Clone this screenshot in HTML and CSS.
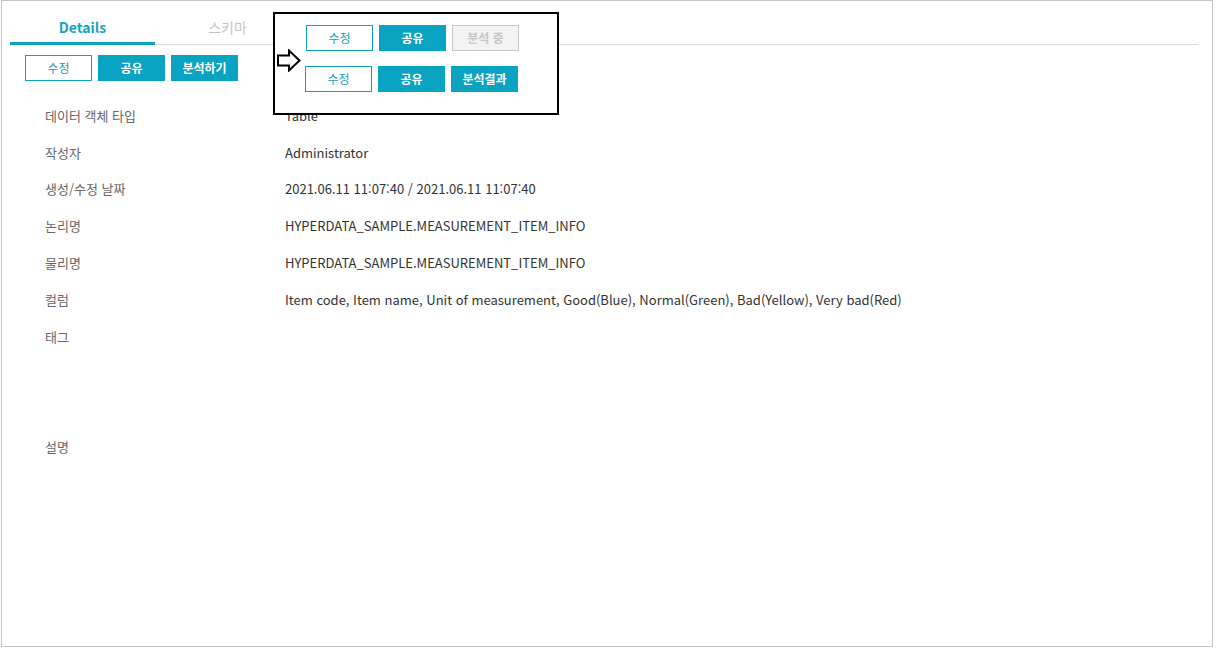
FILE: index.html
```html
<!DOCTYPE html>
<html lang="ko">
<head>
<meta charset="utf-8">
<link rel="stylesheet" href="styles.css">
</head>
<body>
<div class="frame">
  <div class="tabbar">
    <div class="tab active">Details</div>
    <div class="tab">스키마</div>
  </div>
  <div class="actions">
    <button class="btn outline">수정</button>
    <button class="btn fill">공유</button>
    <button class="btn fill">분석하기</button>
  </div>
  <div class="rows">
    <div class="row"><div class="label">데이터 객체 타입</div><div class="value">Table</div></div>
    <div class="row"><div class="label">작성자</div><div class="value">Administrator</div></div>
    <div class="row"><div class="label">생성/수정 날짜</div><div class="value">2021.06.11 11:07:40 / 2021.06.11 11:07:40</div></div>
    <div class="row"><div class="label">논리명</div><div class="value">HYPERDATA_SAMPLE.MEASUREMENT_ITEM_INFO</div></div>
    <div class="row"><div class="label">물리명</div><div class="value">HYPERDATA_SAMPLE.MEASUREMENT_ITEM_INFO</div></div>
    <div class="row"><div class="label">컬럼</div><div class="value">Item code, Item name, Unit of measurement, Good(Blue), Normal(Green), Bad(Yellow), Very bad(Red)</div></div>
    <div class="row tall"><div class="label">태그</div><div class="value"></div></div>
    <div class="row"><div class="label">설명</div><div class="value"></div></div>
  </div>

  <div class="callout">
    <svg class="arrow" width="24" height="23" viewBox="0 0 24 23">
      <polygon points="1,6.5 12,6.5 12,1.5 22.5,11.5 12,21.5 12,16.5 1,16.5" fill="#fff" stroke="#000" stroke-width="2" stroke-linejoin="miter"/>
    </svg>
    <div class="callout-rows">
      <div class="callout-row">
        <button class="btn outline">수정</button>
        <button class="btn fill">공유</button>
        <button class="btn disabled">분석 중</button>
      </div>
      <div class="callout-row second">
        <button class="btn outline">수정</button>
        <button class="btn fill">공유</button>
        <button class="btn fill">분석결과</button>
      </div>
    </div>
  </div>
</div>
</body>
</html>
```

FILE: styles.css
```css
html, body {
  margin: 0;
  padding: 0;
  background: #fff;
}
body {
  font-family: "Noto Sans CJK KR", "Noto Sans", sans-serif;
  color: #333;
}
.frame {
  position: relative;
  box-sizing: border-box;
  width: 1212px;
  height: 647px;
  margin-left: 1px;
  border: 1px solid #c4c4c4;
}
.tabbar {
  display: flex;
  margin: 0 14px 0 8px;
  padding-top: 9px;
  border-bottom: 1px solid #d6dcdd;
}
.tab {
  width: 145px;
  height: 32px;
  line-height: 34px;
  text-align: center;
  font-size: 14px;
  color: #c4c4c4;
  border-bottom: 3px solid transparent;
  margin-bottom: -1px;
}
.tab.active {
  color: #1aa3bf;
  font-weight: 700;
  border-bottom-color: #0aa3c1;
}
.actions {
  display: flex;
  gap: 6px;
  margin: 10px 0 0 23px;
}
.btn {
  box-sizing: border-box;
  width: 67px;
  height: 26px;
  padding: 0;
  font-family: "Noto Sans CJK KR", "Noto Sans", sans-serif;
  font-size: 12px;
  line-height: 24px;
  border: 1px solid #0aa3c1;
  cursor: pointer;
}
.btn.outline {
  background: #fff;
  color: #1a9fb9;
  border-width: 1px;
}
.btn.fill {
  background: #0aa3c1;
  color: #fff;
  font-weight: 700;
}
.btn.disabled {
  background: #f3f3f3;
  border-color: #c8c8c8;
  color: #c6c6c6;
  font-weight: 700;
}
.rows {
  margin-top: 16px;
}
.row {
  display: flex;
  height: 36.8px;
  align-items: center;
  font-size: 13px;
}
.row.tall {
  height: 110px;
  align-items: flex-start;
  padding-top: 9px;
  box-sizing: border-box;
}
.label {
  width: 240px;
  padding-left: 43px;
  color: #666;
  flex-shrink: 0;
}
.value {
  color: #333;
}
.callout {
  position: absolute;
  left: 271px;
  top: 11px;
  box-sizing: border-box;
  width: 286px;
  height: 103px;
  border: 2px solid #000;
  background: #fff;
}
.arrow {
  position: absolute;
  left: 2px;
  top: 35px;
}
.callout-rows {
  display: flex;
  flex-direction: column;
  gap: 15px;
  padding: 11px 0 0 31px;
}
.callout-row {
  display: flex;
  gap: 6px;
}
.callout-row.second {
  margin-left: -1px;
}
```
